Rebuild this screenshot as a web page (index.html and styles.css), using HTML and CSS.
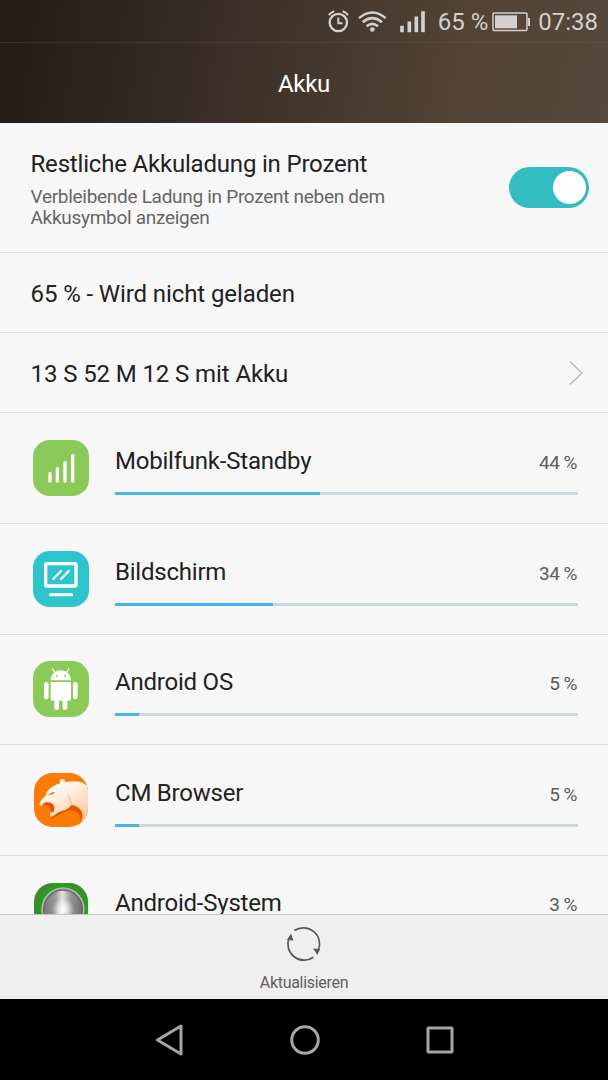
FILE: index.html
```html
<!DOCTYPE html>
<html lang="de">
<head>
    <meta charset="UTF-8">
    <meta name="viewport" content="width=device-width, initial-scale=1.0">
    <title>Akku</title>
    <link rel="stylesheet" href="styles.css">
</head>
<body>

    <header class="header">
        <div class="status">
            <svg class="status-icons" viewBox="0 0 300 125" fill="none" stroke="#d3d0cd">
                <!-- alarm -->
                <circle cx="91" cy="67" r="26" stroke-width="7"/>
                <path d="M91 52v17h13" stroke-width="6"/>
                <path d="M63 45q5-9 16-12M120 45q-5-9-16-12" stroke-width="6"/>
                <!-- wifi -->
                <path d="M153 54q40-34 80 0M164 66q29-24 58 0M176 78q17-14 34 0" stroke-width="7.500"/>
                <circle cx="193" cy="88" r="7" fill="#d3d0cd" stroke="none"/>
                <!-- signal -->
                <path d="M282 77v19M304 64v32M325 49v47M345 33v63" stroke-width="11"/>
            </svg>
            <span class="percent">65 %</span>
            <svg class="battery" viewBox="0 0 38 20">
                <rect x="1" y="1" width="34" height="17.500" rx="1" fill="none" stroke="#d3d0cd" stroke-width="1.500"/>
                <rect x="3" y="3.300" width="22" height="13" fill="#d3d0cd"/>
                <path d="M36 6h2v8h-2z" fill="#d3d0cd"/>
            </svg>
            <span class="clock">07:38</span>
        </div>
        <h1>Akku</h1>
    </header>

    <main class="content">
        <div class="row setting">
            <div class="setting-text">
                <h2>Restliche Akkuladung in Prozent</h2>
                <p>Verbleibende Ladung in Prozent neben dem Akkusymbol anzeigen</p>
            </div>
            <div class="toggle"><div class="knob"></div></div>
        </div>
        <div class="row info">65 % - Wird nicht geladen</div>
        <div class="row info">
            <span>13 S 52 M 12 S mit Akku</span>
            <svg class="chevron" viewBox="0 0 16 26"><path d="M2 1.500l12 11.500-12 11.500" fill="none" stroke="#b5b5b5" stroke-width="1.300"/></svg>
        </div>

        <div class="apps">
            <div class="row app">
                <svg class="app-icon" viewBox="39 30 168 168">
                    <rect x="39" y="30" width="168" height="168" rx="50" fill="#8bc958"/>
                    <path d="M90 131v22M112 116v37M135 98v55M158 76v77" stroke="#fff" stroke-width="10" stroke-linecap="round"/>
                </svg>
                <div class="usage">
                    <div class="label"><span>Mobilfunk-Standby</span><span class="value">44 %</span></div>
                    <div class="bar"><div class="fill" style="width: 44.2%"></div></div>
                </div>
            </div>
            <div class="row app">
                <svg class="app-icon" viewBox="39 33 168 168">
                    <rect x="39" y="33" width="168" height="168" rx="50" fill="#2dc5cb"/>
                    <rect x="77" y="71" width="91" height="67" rx="4" fill="none" stroke="#fff" stroke-width="10"/>
                    <path d="M100 117l23-24M123 117l23-24" stroke="#fff" stroke-width="7" stroke-linecap="round"/>
                    <path d="M91 164h64" stroke="#fff" stroke-width="9" stroke-linecap="round"/>
                </svg>
                <div class="usage">
                    <div class="label"><span>Bildschirm</span><span class="value">34 %</span></div>
                    <div class="bar"><div class="fill" style="width: 34.1%"></div></div>
                </div>
            </div>
            <div class="row app">
                <svg class="app-icon" viewBox="39 34 168 168">
                    <rect x="39" y="34" width="168" height="168" rx="50" fill="#8bc958"/>
                    <path d="M92 92c1-18 13-30 30-30s30 12 31 30z" fill="#fff"/>
                    <path d="M104 68l-6-10M140 68l6-10" stroke="#fff" stroke-width="4" stroke-linecap="round"/>
                    <circle cx="110" cy="79" r="3" fill="#8bc958"/>
                    <circle cx="135" cy="79" r="3" fill="#8bc958"/>
                    <path d="M92 97h61v51q0 5-5 5H97q-5 0-5-5z" fill="#fff"/>
                    <path d="M79 104v38M166 104v38M110 148v26M135 148v26" stroke="#fff" stroke-width="14" stroke-linecap="round"/>
                </svg>
                <div class="usage">
                    <div class="label"><span>Android OS</span><span class="value">5 %</span></div>
                    <div class="bar"><div class="fill" style="width: 5.2%"></div></div>
                </div>
            </div>
            <div class="row app">
                <svg class="app-icon" viewBox="39 36 168 168">
                    <defs>
                        <clipPath id="cmClip"><rect x="42" y="39" width="162" height="162" rx="56"/></clipPath>
                        <linearGradient id="fur" x1="0" y1="0" x2="0.600" y2="1">
                            <stop offset="0" stop-color="#fff"/>
                            <stop offset="0.450" stop-color="#fff1e4"/>
                            <stop offset="1" stop-color="#fbc79c"/>
                        </linearGradient>
                    </defs>
                    <g clip-path="url(#cmClip)">
                        <rect x="42" y="39" width="162" height="162" fill="#fb7b05"/>
                        <!-- shadow below the jaw -->
                        <path d="M90 176q14-8 26-20 20-22 48-20 22 6 24 26-2 12-8 20 2-22-16-29-18-5-38 7-18 12-34 18z" fill="#dd5a08"/>
                        <!-- head and neck -->
                        <path d="M57 134l9-17 10-8q3-14 12-22 12-11 33-17l-2-8 5-5 8 1 6 8q24-5 48 1l22 14v110h-26q10-20 3-37-8-15-30-20-10 14-28 18-14 4-25 14l-9 4-4-6 3-6 8-3q4-12-2-21-8-9-24-6l-9 10z" fill="url(#fur)"/>
                        <path d="M64 137l10-9q17-4 25 5 8 10 1 24l-9-5q2-9-8-14-9-5-19-1z" fill="#d95608"/>
                        <path d="M82 107q8-11 24-11l-9 8-7-1z" fill="#ee7419"/>
                        <path d="M144 106q10 12 9 27" fill="none" stroke="#f8c29a" stroke-width="4"/>
                        <path d="M126 63q7-4 10 5" fill="none" stroke="#f6b17b" stroke-width="3"/>
                    </g>
                </svg>
                <div class="usage">
                    <div class="label"><span>CM Browser</span><span class="value">5 %</span></div>
                    <div class="bar"><div class="fill" style="width: 5.2%"></div></div>
                </div>
            </div>
            <div class="row app">
                <svg class="app-icon" viewBox="39 37 168 168">
                    <defs>
                        <linearGradient id="steel" x1="0" y1="0" x2="1" y2="0">
                            <stop offset="0" stop-color="#777"/>
                            <stop offset="0.300" stop-color="#999"/>
                            <stop offset="0.480" stop-color="#e2e2e2"/>
                            <stop offset="0.700" stop-color="#959595"/>
                            <stop offset="1" stop-color="#6d6d6d"/>
                        </linearGradient>
                        <radialGradient id="shine">
                            <stop offset="0" stop-color="#fff"/>
                            <stop offset="1" stop-color="#fff" stop-opacity="0"/>
                        </radialGradient>
                    </defs>
                    <rect x="42" y="40" width="162" height="162" rx="56" fill="#3f8a2c"/>
                    <circle cx="131" cy="118" r="70" fill="none" stroke="#12ac0c" stroke-width="7"/>
                    <circle cx="129" cy="118" r="65" fill="#b4b4b4"/>
                    <circle cx="129" cy="119" r="58" fill="url(#steel)" stroke="#666" stroke-width="4"/>
                    <circle cx="129" cy="119" r="34" fill="url(#shine)"/>
                </svg>
                <div class="usage">
                    <div class="label"><span>Android-System</span><span class="value">3 %</span></div>
                    <div class="bar"><div class="fill" style="width: 3.2%"></div></div>
                </div>
            </div>
        </div>
    </main>

    <footer class="refresh">
        <svg viewBox="0 0 36 36">
            <path d="M8.300 4.500A16.300 16.300 0 0 1 32.500 24M27.500 31.300A16.300 16.300 0 0 1 3 12" fill="none" stroke="#5b5a58" stroke-width="1.700"/>
            <path d="M5 7.500l2.500 7-6.500-.5zM31.500 29l-4.500-6.500 7 .5z" fill="#5b5a58"/>
        </svg>
        <span>Aktualisieren</span>
    </footer>

    <nav class="navbar">
        <svg viewBox="0 0 32 32"><path d="M3.500 16L27 2v28z"/></svg>
        <svg viewBox="0 0 32 32"><circle cx="16" cy="16" r="13.300"/></svg>
        <svg viewBox="0 0 32 32"><rect x="4" y="4" width="24" height="24" rx="0.500"/></svg>
    </nav>

</body>
</html>
```

FILE: styles.css
```css
* {
    box-sizing: border-box;
}
body {
    margin: 0;
    height: 1080px;
    display: flex;
    flex-direction: column;
    overflow: hidden;
    font-family: Roboto, sans-serif;
    background: #f7f7f7;
    color: #222;
}
h1, h2, p {
    margin: 0;
    font-weight: 400;
}
.header {
    height: 123px;
    flex-shrink: 0;
    background: linear-gradient(100deg, #271e16 5%, #3b2f27 38%, #524335 75%, #55483c);
    color: white;
    text-align: center;
}
.status {
    height: 43px;
    display: flex;
    align-items: flex-start;
    justify-content: flex-end;
    padding-right: 10px;
    border-bottom: 1px solid rgba(130, 110, 85, 0.2);
    color: #d3d0cd;
    font-size: 24px;
    line-height: 44px;
}
.status-icons {
    width: 100px;
    height: 42px;
    margin-right: 30px;
    overflow: visible;
}
.battery {
    width: 38px;
    height: 20px;
    margin: 12px 8px 0 4px;
}
.header h1 {
    font-size: 24px;
    line-height: 82px;
    letter-spacing: -0.3px;
}
.content {
    flex: 1;
    min-height: 0;
    overflow: hidden;
}
.row {
    display: flex;
    border-bottom: 1px solid #d9d9d9;
}
.setting {
    height: 130px;
    justify-content: space-between;
    padding: 25px 19px 0 30.5px;
}
.setting h2 {
    font-size: 24px;
    line-height: 32px;
    letter-spacing: -0.19px;
}
.setting p {
    width: 380px;
    margin-top: 6px;
    font-size: 19px;
    line-height: 21px;
    letter-spacing: -0.29px;
    color: #666;
}
.toggle {
    width: 80px;
    height: 41px;
    margin-top: 19px;
    padding: 4px 3px;
    border-radius: 21px;
    background: #34bec4;
}
.knob {
    width: 33px;
    height: 33px;
    margin-left: auto;
    border-radius: 50%;
    background: white;
}
.info {
    height: 80px;
    align-items: center;
    justify-content: space-between;
    padding: 3px 24px 0 30.5px;
    font-size: 24px;
    letter-spacing: -0.1px;
}
.chevron {
    width: 16px;
    height: 26px;
    margin-top: -3px;
}
.apps {
    padding-top: 0.5px;
}
.app {
    height: 110.5px;
    padding: 26.5px 30px 0 33px;
}
.app-icon {
    width: 56px;
    height: 56px;
    margin-right: 26px;
    flex-shrink: 0;
}
.usage {
    flex: 1;
}
.label {
    display: flex;
    justify-content: space-between;
    height: 52px;
    font-size: 24px;
    line-height: 42px;
    letter-spacing: -0.22px;
}
.value {
    padding: 2px 1px 0 0;
    font-size: 19px;
    letter-spacing: -0.5px;
    color: #5c5c5c;
}
.bar {
    height: 3px;
    background: #cfd8dc;
}
.fill {
    height: 3px;
    background: #41b7e6;
}
.refresh {
    height: 85px;
    flex-shrink: 0;
    display: flex;
    flex-direction: column;
    align-items: center;
    padding-top: 11px;
    border-top: 1px solid #c4c4c4;
    background: #efefef;
    font-size: 16px;
    letter-spacing: -0.3px;
    color: #5f5f5f;
}
.refresh svg {
    width: 36px;
    height: 36px;
}
.refresh span {
    margin-top: 11px;
}
.navbar {
    height: 81px;
    flex-shrink: 0;
    display: flex;
    justify-content: center;
    align-items: center;
    gap: 103px;
    padding-left: 2px;
    background: black;
}
.navbar svg {
    width: 32px;
    height: 32px;
    fill: none;
    stroke: #a5a5a3;
    stroke-width: 3;
    stroke-linejoin: round;
}
```
